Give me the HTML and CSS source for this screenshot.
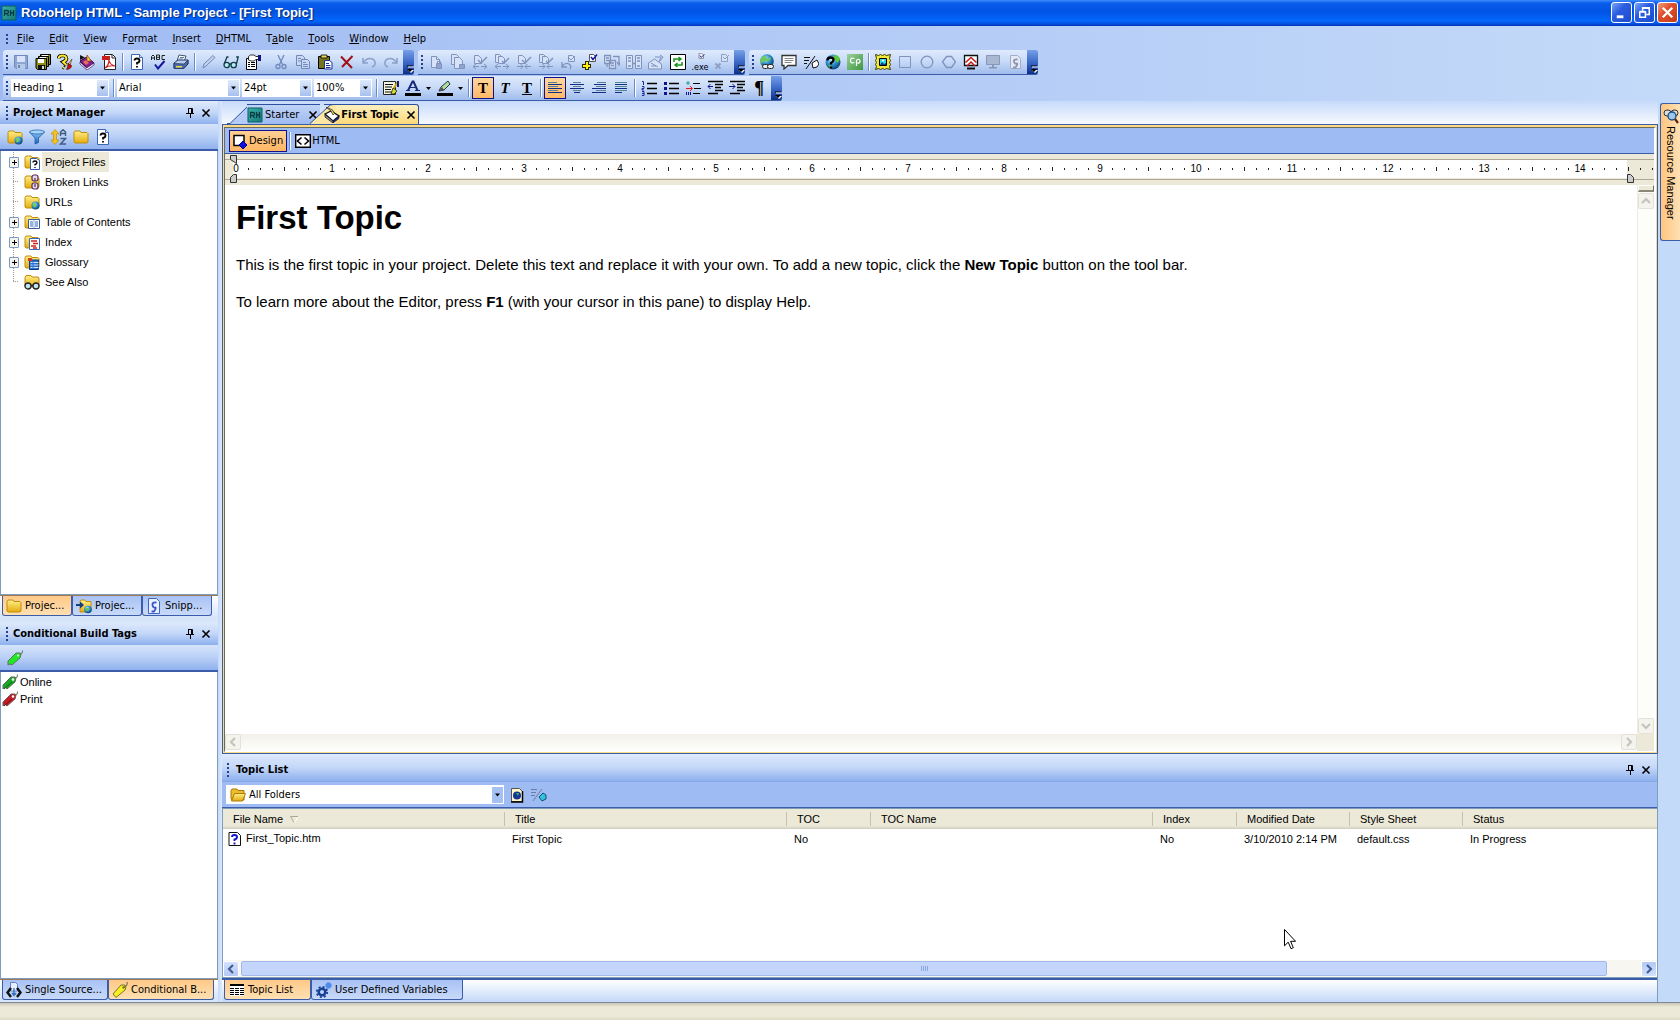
FILE: index.html
```html
<!DOCTYPE html>
<html lang="en">
<head>
<meta charset="utf-8">
<meta name="viewport" content="width=device-width, initial-scale=1">
<title>RoboHelp HTML - Sample Project - [First Topic]</title>
<link rel="stylesheet" href="styles.css">
</head>
<body>
<svg class="sprite" aria-hidden="true">
  <defs>
    <linearGradient id="g-folder" x1="0" y1="0" x2="0" y2="1"><stop offset="0" stop-color="#fff08a"/><stop offset="1" stop-color="#e5ab0c"/></linearGradient>
    <linearGradient id="g-blue" x1="0" y1="0" x2="0" y2="1"><stop offset="0" stop-color="#8cc4f4"/><stop offset="1" stop-color="#1d62b4"/></linearGradient>
    <radialGradient id="g-globe" cx=".4" cy=".35" r=".7"><stop offset="0" stop-color="#c8f2ff"/><stop offset=".5" stop-color="#2f8fc8"/><stop offset="1" stop-color="#063a70"/></radialGradient>
    <linearGradient id="g-teal" x1="0" y1="0" x2="1" y2="1"><stop offset="0" stop-color="#3fb0aa"/><stop offset="1" stop-color="#127a78"/></linearGradient>
    <linearGradient id="g-green" x1="0" y1="0" x2="1" y2="1"><stop offset="0" stop-color="#9bd09a"/><stop offset="1" stop-color="#3c9740"/></linearGradient>
  </defs>

  <symbol id="i-rh" viewBox="0 0 16 16"><path d="M1 1h14v14H1z" fill="url(#g-teal)" stroke="#0d5f63"/><path d="M3.500 11V5.500h2.500q1.500 0 1.500 1.500t-1.500 1.500H3.500M6 8.500 7.500 11M9.500 5v6M12.500 5v6M9.500 8h3" fill="none" stroke="#083c44" stroke-width="1.300"/></symbol>
  <symbol id="i-save" viewBox="0 0 16 16"><path d="M1.500 1.500h13v13H3l-1.500-1.500z" fill="#8ea6d2" stroke="#7189ba"/><path d="M4 2h8v6H4z" fill="#d6e3f8"/><path d="M4 10h8v5H4z" fill="#b8c9e8"/><path d="M5 11h2v3H5z" fill="#6f87b8"/></symbol>
  <symbol id="i-saveall" viewBox="0 0 16 16"><path d="M5.500.5h10v10h-10z" fill="#8f8f1c" stroke="#000"/><path d="M3.500 2.500h10v10h-10z" fill="#8f8f1c" stroke="#000"/><path d="M1 4.500h10.500v11H2.500L1 14z" fill="#8f8f1c" stroke="#000"/><path d="M3 5h6v4H3zM7 1h6v1H7zM5 3h6v1H5z" fill="#fff"/><path d="M3 11h7v4H3z" fill="#111"/><path d="M7 12h2v3H7z" fill="#ddd"/></symbol>
  <symbol id="i-help-edit" viewBox="0 0 16 16"><path d="M1.500 4.500Q2 1.500 5.500 1.500T9.500 4.500Q9.500 6.500 6 8l3.500 3M6 13l1.500 1" fill="none" stroke="#000" stroke-width="3.600"/><path d="M1.500 4.500Q2 1.500 5.500 1.500T9.500 4.500Q9.500 6.500 6 8l3.500 3M6 13l1.500 1" fill="none" stroke="#ffec2c" stroke-width="1.900"/><path d="m15 5-4 5 2 1.500z" fill="#e8c080" stroke="#603000" stroke-width=".6"/><path d="m11 9.500 3.500 2q0 3.500-5 4 1.500-2 1.500-6z" fill="#c81010" stroke="#400" stroke-width=".6"/></symbol>
  <symbol id="i-book" viewBox="0 0 16 16"><path d="m1 7 7-4 7 6-7 5z" fill="#8a1c94" stroke="#2c0640"/><path d="m1 8 6.500 6 7.500-5v2l-7 5-7-6z" fill="#fff" stroke="#44105c" stroke-width=".7"/><path d="m1 1 5 2.500L1 6z" fill="#111"/><path d="M8 1v6h4z" fill="#ffe030" stroke="#9c4c00" stroke-width=".8"/><path d="m4 8 3-2 3 3-3 2z" fill="#e07060"/></symbol>
  <symbol id="i-pdf" viewBox="0 0 16 16"><path d="M3.500.5h8l3 3v12h-11z" fill="#fff" stroke="#222"/><path d="M1 2h8v4H1z" fill="#c81e1e"/><path d="M11 1v3h3" fill="none" stroke="#222"/><path d="M4 14q4-3 4-8 1 5 6 6-6-1-10 2z" fill="none" stroke="#d42020" stroke-width="1.200"/></symbol>
  <symbol id="i-topic-help" viewBox="0 0 16 16"><path d="M2.500.5h8l3 3v12h-11z" fill="#fff" stroke="#3a66b4"/><path d="M10.500.5v3h3" fill="#cfe0fa" stroke="#3a66b4"/><path d="M5.500 6.500q0-2 2.500-2t2.500 2T8 9v1.500M8 12v1.500" fill="none" stroke="#000" stroke-width="1.800"/></symbol>
  <symbol id="i-abc" viewBox="0 0 16 16"><path d="M.5 6V2.500L2 1l1.500 1.500V6M.5 4h3M5.500 1v4.500h3V1h-3M5.500 3.300h3M14 1.500h-3v4h3" fill="none" stroke="#222"/><path d="m4 10.500 3 4 6.500-7.500" fill="none" stroke="#16169c" stroke-width="2"/></symbol>
  <symbol id="i-print" viewBox="0 0 16 16"><path d="m6 1 7 1-2 6-7-1z" fill="#fff" stroke="#456"/><path d="m1 9 4-3h10v4l-4 4H1z" fill="#b9cdea" stroke="#223a6c"/><path d="m1 9.500 10 .5 4-4v4l-4 4.500H1z" fill="#4a6aa4" stroke="#182c58" stroke-width=".7"/><path d="M3 12h6v1.500H3z" fill="#e9e04c"/><path d="M7 3.500h4M6 5h4" stroke="#5577b0"/></symbol>
  <symbol id="i-pencil" viewBox="0 0 16 16"><path d="m2 14 1-4L12 1.500l2 2L5 12z" fill="#c3d2ec" stroke="#7189ba"/></symbol>
  <symbol id="i-glasses" viewBox="0 0 16 16"><g fill="#b6ecf4" stroke="#123c48" stroke-width="1.300"><circle cx="3.700" cy="11" r="2.700"/><circle cx="10.700" cy="11" r="2.700"/><path d="M6.300 10h1.800M1.200 10 4 3h1.500M13.400 10l1.800-7h-2" fill="none"/></g></symbol>
  <symbol id="i-props" viewBox="0 0 16 16"><path d="M1.500 4.500h10v11h-10z" fill="#fff" stroke="#000"/><path d="M3 8.500h2M6 8.500h4M3 10.500h2M6 10.500h4M3 12.500h2M6 12.500h4" stroke="#000"/><path d="M3.500 6V2.500l2-1.500H9l2 1.500h4v3h-4L9 7H6z" fill="#fff" stroke="#000" stroke-width=".8"/><path d="M13 1h3v6h-3z" fill="#141480"/></symbol>
  <symbol id="i-cut" viewBox="0 0 16 16"><g fill="none" stroke="#7189ba" stroke-width="1.300"><path d="M5 1l4.500 9.500M11 1 6.500 10.500"/><circle cx="5" cy="12.500" r="2"/><circle cx="11" cy="12.500" r="2"/></g></symbol>
  <symbol id="i-copy" viewBox="0 0 16 16"><g fill="#c9d8f2" stroke="#7189ba"><path d="M1.500 1.500h6l2 2v8h-8z"/><path d="M6.500 5.500h6l2 2v7h-8z"/><path d="M3 4.500h3M3 7h3M8 8.500h3M8 10.500h5M8 12.500h5"/></g></symbol>
  <symbol id="i-paste" viewBox="0 0 16 16"><path d="M1.500 2.500h11v12h-11z" fill="#77721e" stroke="#000"/><path d="M4 1h6v3H4z" fill="#e6d85c" stroke="#000" stroke-width=".8"/><path d="M7.500 6.500h5l2.500 2v6.500H7.500z" fill="#fff" stroke="#1c3290"/><path d="M9 9.500h3M9 11.500h4.500M9 13.500h4.500" stroke="#1c3290"/></symbol>
  <symbol id="i-delete" viewBox="0 0 16 16"><path d="M2 2.500 13 14M13.500 2 3 13" fill="none" stroke="#a01016" stroke-width="2"/></symbol>
  <symbol id="i-undo" viewBox="0 0 16 16"><path d="M2 4v5h5M2.500 8.500Q5 4.500 9 4.500t5 3.500-3 5" fill="none" stroke="#8ba0c8" stroke-width="1.500"/></symbol>
  <symbol id="i-redo" viewBox="0 0 16 16"><path d="M14 4v5H9M13.500 8.500Q11 4.500 7 4.500T2 8t3 5" fill="none" stroke="#8ba0c8" stroke-width="1.500"/></symbol>

  <symbol id="i-lock1" viewBox="0 0 16 16"><g fill="#d6e2f7" stroke="#7f93bd"><path d="M3.500 2.500h5l3 3v8h-8z"/><path d="M8.500 2.500v3h3"/><path d="M8.500 9.500h5v5h-5z" fill="#8fa3cc"/><path d="M9.500 9.500v-2h3v2" fill="none"/></g></symbol>
  <symbol id="i-lock2" viewBox="0 0 16 16"><g fill="#d6e2f7" stroke="#7f93bd"><path d="M1.500.5h5l2 2v8h-7z"/><path d="M4.500 3.500h5l3 3v8h-8z"/><path d="M9.500 10.500h5v4h-5z" fill="#8fa3cc"/></g></symbol>
  <symbol id="i-check-in" viewBox="0 0 16 16"><g fill="none" stroke="#7f93bd"><path d="M2.500 1.500h4l3 3v5h-7z" fill="#d6e2f7"/><path d="m6 6 3 3 6-6" stroke-width="1.500"/><path d="M1 12.500h6M4 10l-3 2.500L4 15M15 12.500H9m3-2.500 3 2.500-3 2.500"/></g></symbol>
  <symbol id="i-check-all" viewBox="0 0 16 16"><g fill="none" stroke="#7f93bd"><path d="M1.500.5h4l2 2v6h-6z" fill="#d6e2f7"/><path d="M4.500 2.500h4l2 2v5h-6z" fill="#d6e2f7"/><path d="m8 7 2 2 5-5" stroke-width="1.500"/><path d="M1 12.500h6M4 10l-3 2.500L4 15M15 12.500H9m3-2.500 3 2.500-3 2.500"/></g></symbol>
  <symbol id="i-check-to" viewBox="0 0 16 16"><g fill="none" stroke="#7f93bd"><path d="M2.500 1.500h4l3 3v5h-7z" fill="#d6e2f7"/><path d="m6 6 3 3 6-6" stroke-width="1.500"/><path d="M1 12.500h6M4.500 10 7 12.500 4.500 15M15 12.500H9m2.500-2.500L9 12.500l2.500 2.500"/></g></symbol>
  <symbol id="i-check-to-all" viewBox="0 0 16 16"><g fill="none" stroke="#7f93bd"><path d="M1.500.5h4l2 2v6h-6z" fill="#d6e2f7"/><path d="M4.500 2.500h4l2 2v5h-6z" fill="#d6e2f7"/><path d="m8 7 2 2 5-5" stroke-width="1.500"/><path d="M1 12.500h6M4.500 10 7 12.500 4.500 15M15 12.500H9m2.500-2.500L9 12.500l2.500 2.500"/></g></symbol>
  <symbol id="i-undo-check" viewBox="0 0 16 16"><g fill="none" stroke="#7f93bd"><path d="M8.500 1.500h4l2 2v4h-6z" fill="#d6e2f7"/><path d="m9 4 2 2 4-4"/><path d="M2 8v5h5M2 12q4-4 7-2t1 5" stroke-width="1.300"/></g></symbol>
  <symbol id="i-add-version" viewBox="0 0 16 16"><path d="M7.500.5h4l2 2v5h-6z" fill="#fff" stroke="#555"/><path d="m9 3 2 2.500 4-5" fill="none" stroke="#16169c" stroke-width="1.500"/><path d="M3 7h4v3h2v4H7v2H3v-2H0v-4h3z" fill="#2c2c00"/><path d="M4 8h2v3h2v2H6v2H4v-2H1v-2h3z" fill="#ffee14"/></symbol>
  <symbol id="i-diff" viewBox="0 0 16 16"><g fill="#d6e2f7" stroke="#7f93bd" stroke-width="1.300"><path d="M.5 1.500h6v8h-6zM5.500 6.500h6v8h-6z"/><path d="M9 2.500h6v8M2 4h3M2 6.500h3M7 9h3M7 11.500h3M3 10v3M13 8l2 3 1-3" fill="none"/></g></symbol>
  <symbol id="i-history" viewBox="0 0 16 16"><g fill="#d6e2f7" stroke="#7f93bd"><path d="M.5 1.500h6v13h-6zM9.500 1.500h6v13h-6z"/><path d="M2 4h3M2 7h3M2 12h3M11 4h3M11 7h3M11 12h3M6 9.500h4" fill="none" stroke-width="1.500"/></g></symbol>
  <symbol id="i-vprops" viewBox="0 0 16 16"><g fill="#d6e2f7" stroke="#7f93bd"><path d="m.5 9 6-4 7 5v5H.5z"/><path d="M3 9l7 4M7 3h6l-2 5M12 1l3 2-3 4M3 12h5" fill="none"/></g></symbol>
  <symbol id="i-refresh" viewBox="0 0 16 16"><path d="M.5.5h15v15H.5z" fill="#fff" stroke="#000"/><path d="M4 8V5h6M8.500 3l2.500 2-2.500 2M12 8v3H6M7.500 9 5 11l2.500 2" fill="none" stroke="#17901c" stroke-width="1.500"/></symbol>
  <symbol id="i-vcheck" viewBox="0 0 16 16"><path d="M6.500.5h4l3 3v5h-7z" fill="#fff" stroke="#555"/><path d="m8 4 2 3 5-5" fill="none" stroke="#16169c" stroke-width="1.500"/></symbol>
  <symbol id="i-xcheck" viewBox="0 0 16 16"><g fill="none" stroke="#8f9fc2"><path d="M7.500.5h4l2 2v5h-6z" fill="#d6e2f7"/><path d="m9 3 2 2 4-4"/><path d="m1.500 9.500 5 5M6.500 9.500l-5 5" stroke-width="1.800"/></g></symbol>

  <symbol id="i-hyperlink" viewBox="0 0 16 16"><circle cx="8" cy="7" r="6.800" fill="url(#g-globe)"/><path d="M4 2q3 0 4 2t4-1q0 4-4 4T3 9 1 5z" fill="#6cc860"/><g fill="#eee" stroke="#222"><rect x="3.500" y="10.500" width="6" height="4" rx="2"/><rect x="8.500" y="10.500" width="6" height="4" rx="2"/></g></symbol>
  <symbol id="i-popup" viewBox="0 0 16 16"><path d="M1 1.500h14v10H7L3 15v-3.500H1z" fill="#fff" stroke="#333" stroke-width="1.300"/><path d="M3.500 4.500h9M3.500 6.500h9M3.500 8.500h7" stroke="#888"/></symbol>
  <symbol id="i-snippet" viewBox="0 0 16 16"><path d="M1 3.500h6M1 6.500h5M1 9.500h3" stroke="#111"/><path d="M3 15 12 2" stroke="#111" fill="none"/><path d="m9 9 5-3 2 4-2 3-4 1z" fill="#fff" stroke="#111"/></symbol>
  <symbol id="i-globe-help" viewBox="0 0 16 16"><circle cx="8" cy="8" r="7.500" fill="url(#g-globe)"/><path d="M9 1q5 0 6 4l-2 4-4-4zM3 11l4 1-1 3z" fill="#5cc83c"/><path d="M2.500 6.500q0-3 3-3t3 2.500q0 1.500-2.500 3v1.500M6 12.500v2" fill="none" stroke="#000" stroke-width="2.300"/></symbol>
  <symbol id="i-cp" viewBox="0 0 16 16"><path d="M0 0h16v16H0z" fill="url(#g-green)"/><path d="M7.500 4.500q-4-1.500-4 2t4 2M9.500 12V6M9.500 6q3.500-1.500 3.500 1.200t-3.500 1.500" fill="none" stroke="#fff" stroke-width="1.200"/></symbol>
  <symbol id="i-image" viewBox="0 0 16 16"><path d="m.5.500 3 1 2-1 2 1 2-1 2 1 4-1-1 4 1 2-1 2 1 2-1 2 1 3-4-1-2 1-2-1-2 1-2-1-3 1 1-3-1-2 1-2-1-2 1-2z" fill="#f0e83c" stroke="#3c3a00"/><path d="M4.500 4.500h7v7h-7z" fill="#30d8e8" stroke="#000"/><path d="m5 11 2-3 2 2 2-1v2z" fill="#0a4080"/><circle cx="8" cy="6.500" r="1" fill="#fff"/></symbol>
  <symbol id="i-rect" viewBox="0 0 16 16"><path d="M2.500 2.500h11v11h-11z" fill="none" stroke="#7f93bd"/></symbol>
  <symbol id="i-circle" viewBox="0 0 16 16"><circle cx="8" cy="8" r="5.800" fill="none" stroke="#7f93bd" stroke-width="1.300"/></symbol>
  <symbol id="i-poly" viewBox="0 0 16 16"><path d="m1.500 8 4-5.500h5l4 5.500-4 5.500h-5z" fill="none" stroke="#7f93bd" stroke-width="1.300"/></symbol>
  <symbol id="i-screen-up" viewBox="0 0 16 16"><path d="M1.500 1.500h13v10h-13z" fill="#eff" stroke="#111" stroke-width="1.300"/><path d="M4 14.500h8" stroke="#111" stroke-width="2"/><path d="m2.500 8.500 5.500-5 5.500 5M4 12l4-4 4 4" fill="none" stroke="#d01818" stroke-width="1.500"/></symbol>
  <symbol id="i-screen" viewBox="0 0 16 16"><path d="M1.500 1.500h13v9h-13z" fill="#a9b7d2" stroke="#8797b8"/><path d="M7 11h2v2h3v1.500H4V13h3z" fill="#8797b8"/></symbol>
  <symbol id="i-script-gray" viewBox="0 0 16 16"><path d="M3.500 1.500h7l3 3v10h-10z" fill="#e3eaf6" stroke="#a3aec6"/><path d="M10.500 5.500q-4-.5-3.500 2t2.500 2-1 4H6" fill="none" stroke="#8995b2" stroke-width="1.800"/></symbol>

  <symbol id="i-style" viewBox="0 0 16 16"><path d="M.5 1.500h12v13H.5z" fill="#f6f4e2" stroke="#222"/><path d="M2 4.500h8M2 7h7M2 9.500h6M2 12h9" stroke="#111"/><path d="m14.500 2-4 7" stroke="#c8a800" stroke-width="2"/><path d="m10 8 4 3-3 3H8z" fill="#d8e020" stroke="#222" stroke-width=".8"/><path d="M14 1h2v6h-2z" fill="#101890"/></symbol>
  <symbol id="i-fontcolor" viewBox="0 0 16 16"><path d="m3 10.500 4.500-9h1l4 9" fill="none" stroke="#1a2a78" stroke-width="2"/><path d="M4.500 7.500h6M1 10.500h4M10 10.500h5" stroke="#1a2a78"/><path d="M0 13h16v3H0z" fill="#000"/></symbol>
  <symbol id="i-highlight" viewBox="0 0 16 16"><path d="m2 11 2-4 7-6 2 3-6 6z" fill="#b0dc9c" stroke="#24304c"/><path d="m2 11 5-1-2-3z" fill="#555"/><path d="M0 13h16v3H0z" fill="#000"/></symbol>
  <symbol id="i-left" viewBox="0 0 16 16"><path d="M1 2.500h9M1 6.500h10M1 10.500h10" stroke="#5d7f92"/><path d="M1 4.500h14M1 8.500h14M1 12.500h14" stroke="#142c86"/></symbol>
  <symbol id="i-center" viewBox="0 0 16 16"><path d="M4 2.500h8M4 6.500h8M4 10.500h8" stroke="#5d7f92"/><path d="M1 4.500h14M1 8.500h14M5 12.500h6" stroke="#142c86"/></symbol>
  <symbol id="i-right" viewBox="0 0 16 16"><path d="M6 2.500h9M5 6.500h10M5 10.500h10" stroke="#5d7f92"/><path d="M3 4.500h12M1 8.500h14M1 12.500h14" stroke="#142c86"/></symbol>
  <symbol id="i-justify" viewBox="0 0 16 16"><path d="M2 2.500h12M2 6.500h12M2 10.500h12" stroke="#4d8c92"/><path d="M2 4.500h12M2 8.500h12M2 12.500h7" stroke="#142c86"/></symbol>
  <symbol id="i-ol" viewBox="0 0 16 16"><path d="M6 3.500h10M6 8.500h10M6 13.500h10" stroke="#000" stroke-width="1.300"/><path d="M1 1.500h1.500V5M1 6.500h2v2H1v1.500h2M1 11.500h2v4H1M1 13.500h2" fill="none" stroke="#1a2a90"/></symbol>
  <symbol id="i-ul" viewBox="0 0 16 16"><path d="M6 3.500h10M6 8.500h10M6 13.500h10" stroke="#000" stroke-width="1.300"/><path d="M1 2h3v3H1zM1 7h3v3H1zM1 12h3v3H1z" fill="#12128c"/></symbol>
  <symbol id="i-multi" viewBox="0 0 16 16"><path d="M8 3.500h7M9 8.500h7M8 13.500h7" stroke="#000"/><path d="M3 1v4M1 3h4" stroke="#18a088"/><path d="M1 8.500h6M5 6l2.500 2.500L5 11" fill="none" stroke="#e01818"/><path d="M1.500 12v3M3.500 12v3M5.500 12v3" stroke="#12128c"/></symbol>
  <symbol id="i-outdent" viewBox="0 0 16 16"><path d="M1 1.500h15M8 4.500h8M8 7.500h6M8 10.500h8M1 13.500h10" stroke="#000" stroke-width="1.500"/><path d="M6 6.500H1M3.500 4 1 6.500 3.500 9" fill="none" stroke="#12128c"/></symbol>
  <symbol id="i-indent" viewBox="0 0 16 16"><path d="M1 1.500h15M8 4.500h8M8 7.500h6M8 10.500h8M1 13.500h10" stroke="#000" stroke-width="1.500"/><path d="M0 6.500h6M3.500 4 6 6.500 3.500 9" fill="none" stroke="#12128c"/></symbol>

  <symbol id="i-folder" viewBox="0 0 16 16"><path d="M1 3.500 2 2h5l1 1.500h6l1 1V13l-1 1H2l-1-1z" fill="url(#g-folder)" stroke="#c08c10"/></symbol>
  <symbol id="i-folder-open" viewBox="0 0 16 16"><path d="M1 3.500 2 2h5l1 1.500h6V13H2l-1-1z" fill="#eebd2c" stroke="#a87808"/><path d="m1.500 14 3-7.500h11l-3 7.500z" fill="url(#g-folder)" stroke="#b07c08"/></symbol>
  <symbol id="i-folder-web" viewBox="0 0 16 16"><use href="#i-folder"/><circle cx="11.500" cy="11.500" r="4" fill="url(#g-globe)"/><path d="m9 9 3.500.5-.5 3-2 1-1-2z" fill="#70cc58"/></symbol>
  <symbol id="i-filter" viewBox="0 0 16 16"><path d="M.5 3 6 9v6l3.500-1.500V9l6-6z" fill="url(#g-blue)" stroke="#1c5ca8" stroke-width=".8"/><ellipse cx="8" cy="3" rx="7.500" ry="2" fill="#a8d4f8" stroke="#2868b0" stroke-width=".8"/></symbol>
  <symbol id="i-sort" viewBox="0 0 16 16"><path d="m4 .500 4 4.500H5.500v6H8L4 15.500 0 11h2.500V5H0z" fill="#f5c31e" stroke="#c48a08" stroke-width=".7"/><path d="M9.500 7V3L12 .700 14.500 3v4M9.500 4.500h5M9.500 9.500h5l-5 5.500h5.500" fill="none" stroke="#3c5c84" stroke-width="1.400"/></symbol>
  <symbol id="i-folder-help" viewBox="0 0 16 16"><use href="#i-folder"/><path d="M6.500 4.500h6l3 2v9h-9z" fill="#fff" stroke="#2c5cb8"/><path d="M9 8.500q0-1.500 2-1.500t2 1.500-2 2v1M11 13v1" fill="none" stroke="#000" stroke-width="1.300"/></symbol>
  <symbol id="i-folder-broken" viewBox="0 0 16 16"><use href="#i-folder"/><g fill="#e8d8e8" stroke="#54285c" stroke-width="1.200"><rect x="8" y="1" width="6" height="6" rx="2"/><rect x="8" y="9" width="6" height="6" rx="2"/><path d="M11 4v3M11 10v3"/></g></symbol>
  <symbol id="i-folder-toc" viewBox="0 0 16 16"><use href="#i-folder"/><path d="M4.500 5.500h11v9h-11z" fill="#fff" stroke="#3c5c9c"/><path d="M6 8h3M6 10h3M6 12h3M11 8h3M11 10h3M11 12h3" stroke="#3468c0"/><path d="M10 6v8" stroke="#9cb4d8"/></symbol>
  <symbol id="i-folder-index" viewBox="0 0 16 16"><use href="#i-folder"/><path d="M5.500 4.500h10v11h-10z" fill="#fff" stroke="#3468c0"/><path d="M7 7h6M9 9.500h5M7 12h5M9 14h4" stroke="#d02020" stroke-width="1.300"/></symbol>
  <symbol id="i-folder-gloss" viewBox="0 0 16 16"><use href="#i-folder"/><path d="M5.500 6h9v9.500h-9z" fill="#2c70d0" stroke="#0c3c88"/><path d="M6.500 8.500h2M9.500 8.500h5M6.500 11h2M9.500 11h5M6.500 13.500h2M9.500 13.500h5" stroke="#cfe4ff"/><path d="M4 4h4v3H4z" fill="#d04020"/></symbol>
  <symbol id="i-folder-see" viewBox="0 0 16 16"><path d="M1 3.500 2 1.500h5L8 3h6l1 1v9H1z" fill="url(#g-folder)" stroke="#c08c10"/><g fill="#bfe4f6" stroke="#222" stroke-width="1.300"><circle cx="4" cy="12" r="3"/><circle cx="12" cy="12" r="3"/><path d="M7 11.500h2"/></g></symbol>
  <symbol id="i-folder-arrow" viewBox="0 0 16 16"><path d="M4 3.500 5 2h4l1 1.500h5V13l-1 1H4z" fill="url(#g-folder)" stroke="#c08c10"/><path d="M0 6h4V3.500L8 7l-4 3.500V8H0z" fill="#123c84"/><circle cx="12" cy="11.500" r="3.800" fill="url(#g-globe)"/><path d="m10 10 3 0-1 3-2 0z" fill="#60c850"/></symbol>
  <symbol id="i-script" viewBox="0 0 16 16"><path d="M2.500.5h8l3 3v12h-11z" fill="#e8f0ff" stroke="#3c64c0"/><path d="M10.500 4.500q-4.500-.5-4 2.500t2.500 2.500-1 4H5.500" fill="none" stroke="#3c58c8" stroke-width="1.800"/></symbol>

  <symbol id="i-tag-green" viewBox="0 0 16 16"><path d="m1 15 0-4 8-8 4 0 1 1-1 4-8 7-2-1z" fill="#22e824" stroke="#667066"/><path d="M13 4q3 0 2.500-3.500" fill="none" stroke="#667066"/><circle cx="11" cy="5.500" r="1" fill="#fff"/></symbol>
  <symbol id="i-tag-online" viewBox="0 0 16 16"><path d="m1 15 0-4 8-8 4 0 1 1-1 4-8 7-2-2z" fill="#18a824" stroke="#5a6a5a"/><path d="m2 15 8-7" stroke="#0c6414"/><path d="M13 4q3 0 2.500-3.500" fill="none" stroke="#667066"/><circle cx="11" cy="5.500" r="1.300" fill="#fff"/></symbol>
  <symbol id="i-tag-print" viewBox="0 0 16 16"><path d="m1 15 0-4 8-8 4 0 1 1-1 4-8 7-2-2z" fill="#c81c24" stroke="#6a5a5a"/><path d="m2 15 8-7" stroke="#700c14"/><path d="M13 4q3 0 2.500-3.500" fill="none" stroke="#667066"/><circle cx="11" cy="5.500" r="1.300" fill="#fff"/></symbol>
  <symbol id="i-tag-yellow" viewBox="0 0 16 16"><path d="m1 12 8-9 4 0 1 2-1 3-9 7.500z" fill="#f6f020" stroke="#77742c"/><path d="M12 5q4-1 3-5" fill="none" stroke="#5c5a4c"/><circle cx="11.500" cy="5.500" r="1.200" fill="#77742c"/></symbol>
  <symbol id="i-source" viewBox="0 0 16 16"><path d="M4.500.5h5l2 2V9h-7z" fill="#e6f0ff" stroke="#5c84cc"/><path d="M5 6 1.500 10.500 5 15M11 6l3.500 4.500L11 15" fill="none" stroke="#111" stroke-width="2.500"/><path d="M8 6v7M6 11l2 2.500 2-2.500" fill="none" stroke="#2c6cb8" stroke-width="1.300"/></symbol>
  <symbol id="i-grid" viewBox="0 0 16 16"><path d="M1 2h14v12H1z" fill="#fff"/><path d="M1 2h14v2H1z" fill="#000"/><path d="M1 6.500h14M1 8.500h14M1 10.500h14M1 12.500h14" stroke="#000" stroke-dasharray="4 1"/></symbol>
  <symbol id="i-gears" viewBox="0 0 16 16"><circle cx="6" cy="10" r="3.300" fill="none" stroke="#173f94" stroke-width="2.500"/><circle cx="6" cy="10" r="5.200" fill="none" stroke="#173f94" stroke-width="1.800" stroke-dasharray="2 2.080"/><circle cx="12.500" cy="3.500" r="2.700" fill="#4c8ce8"/><circle cx="12.500" cy="3.500" r="3" fill="none" stroke="#4c8ce8" stroke-dasharray="1.300 1"/></symbol>
  <symbol id="i-view" viewBox="0 0 16 16"><path d="M2.500 1.500h8l3 3v10h-11z" fill="#fff9c8" stroke="#555"/><path d="M13.500 4v11H2" fill="none" stroke="#000" stroke-width="1.500"/><circle cx="8" cy="8.500" r="4" fill="#14359c"/><path d="m7 6 3 0-1 3z" fill="#38b850"/></symbol>
  <symbol id="i-sync" viewBox="0 0 16 16"><path d="M0 2.500h6M0 5.500h5M0 8.500h4M2 14 11 2" stroke="#6d7c9a" fill="none"/><path d="m8 10 4-4 3 2v4l-4 2z" fill="#30c4d8" stroke="#174c80"/></symbol>
  <symbol id="i-topic" viewBox="0 0 16 16"><path d="M2 1.500h8.500l3 3v10H2z" fill="#fff" stroke="#111"/><path d="M5 6q0-2 2.500-2T10 6 7.500 8.500v1.500M7.500 11.500v2" fill="none" stroke="#1414c8" stroke-width="1.900"/></symbol>
  <symbol id="i-design" viewBox="0 0 16 16"><path d="M2 2.500h10v10H2z" fill="#fff" stroke="#000" stroke-width="1.500"/><path d="m11 8 4 4-4 4-4-4z" fill="#1010d8" stroke="#000090"/></symbol>
  <symbol id="i-html" viewBox="0 0 16 16"><path d="M.7 1.700h14.600v12.600H.7z" fill="#fff" stroke="#000" stroke-width="1.400"/><path d="m6.500 4.500-4 3.500 4 3.500M9.500 4.500l4 3.500-4 3.500" fill="none" stroke="#000" stroke-width="1.600"/></symbol>
  <symbol id="i-editor" viewBox="0 0 16 16"><path d="m1 7 6-3 8 5-6 5z" fill="#fff" stroke="#111" stroke-width="1.300"/><path d="m9 14 6-5v2.500l-6 4.500z" fill="#1c2890" stroke="#111" stroke-width=".6"/><path d="m1 7.500 8 6.500v2L1 10z" fill="#999" stroke="#111" stroke-width=".8"/><path d="m2 0 5 4 2 4 1.500-1.500L8.500 3z" fill="#d8d850" stroke="#333" stroke-width=".8"/></symbol>
  <symbol id="i-resource" viewBox="0 0 16 16"><rect x="1" y="2" width="7" height="6" rx="3" fill="#ddd" stroke="#333"/><rect x="8" y="2" width="7" height="6" rx="3" fill="#ddd" stroke="#333"/><circle cx="9" cy="8" r="4" fill="#9cc8ec" stroke="#1f4f84" stroke-width="1.400"/><path d="m12 11 3 4" stroke="#5c2410" stroke-width="2.200"/></symbol>
  <symbol id="i-pin" viewBox="0 0 10 10"><path d="M3 .500h4.500M3.500.5v5M6.500.5v5M7.500.5v5M1 5.500h8M5.500 6v4" fill="none" stroke="#000"/></symbol>
  <symbol id="i-x" viewBox="0 0 10 10"><path d="m1.500 1.500 7 7M8.500 1.500l-7 7" fill="none" stroke="#000" stroke-width="1.600"/></symbol>
  <symbol id="i-chev" viewBox="0 0 10 10"><path d="m7 1-4 4 4 4" fill="none" stroke="currentColor" stroke-width="2.200"/></symbol>
  <symbol id="i-more" viewBox="0 0 8 8"><path d="M1 1h6" stroke="#000"/><path d="M2 2h6" stroke="#fff"/><path d="M2 5h6L5 8z" fill="#fff"/><path d="M1 4h6L4 7z" fill="#000"/></symbol>
  <symbol id="i-down" viewBox="0 0 5 3"><path d="M0 0h5L2.500 3z" fill="#000"/></symbol>
</svg>

<header class="titlebar">
  <svg class="icon"><use href="#i-rh"/></svg>
  <h1 class="titlebar-text">RoboHelp HTML - Sample Project - [First Topic]</h1>
  <button class="winbtn" aria-label="Minimize"><svg viewBox="0 0 20 20"><path d="M5 14.500h7" stroke="#fff" stroke-width="3"/></svg></button>
  <button class="winbtn" aria-label="Restore"><svg viewBox="0 0 20 20"><path d="M5 9.500h6v5.500H5zM5 9h6M8 8V5h7v7h-3M8 5.500h7" fill="none" stroke="#fff" stroke-width="1.600"/></svg></button>
  <button class="winbtn winbtn-close" aria-label="Close"><svg viewBox="0 0 20 20"><path d="m5 5 10 10M15 5 5 15" stroke="#fff" stroke-width="2.400"/></svg></button>
</header>

<nav class="menubar" aria-label="Main menu">
  <span class="grip"></span>
  <button><u>F</u>ile</button><button><u>E</u>dit</button><button><u>V</u>iew</button><button>F<u>o</u>rmat</button><button><u>I</u>nsert</button><button><u>D</u>HTML</button><button>T<u>a</u>ble</button><button><u>T</u>ools</button><button><u>W</u>indow</button><button><u>H</u>elp</button>
</nav>

<div class="toolbars">
  <div class="toolbar-row">
    <div class="toolbar" role="toolbar" aria-label="Standard">
      <span class="grip"></span>
      <button class="tb" aria-label="Save"><svg class="icon"><use href="#i-save"/></svg></button>
      <button class="tb" aria-label="Save all"><svg class="icon"><use href="#i-saveall"/></svg></button>
      <button class="tb" aria-label="Generate"><svg class="icon"><use href="#i-help-edit"/></svg></button>
      <button class="tb" aria-label="View output"><svg class="icon"><use href="#i-book"/></svg></button>
      <button class="tb" aria-label="Create PDF"><svg class="icon"><use href="#i-pdf"/></svg></button>
      <span class="sep"></span>
      <button class="tb" aria-label="New topic"><svg class="icon"><use href="#i-topic-help"/></svg></button>
      <button class="tb" aria-label="Spell check"><svg class="icon"><use href="#i-abc"/></svg></button>
      <button class="tb" aria-label="Print"><svg class="icon"><use href="#i-print"/></svg></button>
      <span class="sep"></span>
      <button class="tb" aria-label="Edit"><svg class="icon"><use href="#i-pencil"/></svg></button>
      <button class="tb" aria-label="View"><svg class="icon"><use href="#i-glasses"/></svg></button>
      <button class="tb" aria-label="Properties"><svg class="icon"><use href="#i-props"/></svg></button>
      <span class="gap"></span>
      <button class="tb" aria-label="Cut"><svg class="icon"><use href="#i-cut"/></svg></button>
      <button class="tb" aria-label="Copy"><svg class="icon"><use href="#i-copy"/></svg></button>
      <button class="tb" aria-label="Paste"><svg class="icon"><use href="#i-paste"/></svg></button>
      <button class="tb" aria-label="Delete"><svg class="icon"><use href="#i-delete"/></svg></button>
      <button class="tb" aria-label="Undo"><svg class="icon"><use href="#i-undo"/></svg></button>
      <button class="tb" aria-label="Redo"><svg class="icon"><use href="#i-redo"/></svg></button>
      <button class="more" aria-label="Toolbar options"><svg><use href="#i-more"/></svg></button>
    </div>
    <div class="toolbar" role="toolbar" aria-label="Version control">
      <span class="grip"></span>
      <button class="tb" aria-label="Open version control"><svg class="icon"><use href="#i-lock1"/></svg></button>
      <button class="tb" aria-label="Get latest"><svg class="icon"><use href="#i-lock2"/></svg></button>
      <button class="tb" aria-label="Check out"><svg class="icon"><use href="#i-check-in"/></svg></button>
      <button class="tb" aria-label="Check out all"><svg class="icon"><use href="#i-check-all"/></svg></button>
      <button class="tb" aria-label="Check in"><svg class="icon"><use href="#i-check-to"/></svg></button>
      <button class="tb" aria-label="Check in all"><svg class="icon"><use href="#i-check-to-all"/></svg></button>
      <button class="tb" aria-label="Undo check out"><svg class="icon"><use href="#i-undo-check"/></svg></button>
      <button class="tb" aria-label="Add to version control"><svg class="icon"><use href="#i-add-version"/></svg></button>
      <button class="tb" aria-label="Show differences"><svg class="icon"><use href="#i-diff"/></svg></button>
      <button class="tb" aria-label="Show history"><svg class="icon"><use href="#i-history"/></svg></button>
      <button class="tb" aria-label="File properties"><svg class="icon"><use href="#i-vprops"/></svg></button>
      <button class="tb" aria-label="Refresh status"><svg class="icon"><use href="#i-refresh"/></svg></button>
      <button class="tb tb-exe"><svg><use href="#i-vcheck"/></svg><span>.exe</span></button>
      <button class="tb" aria-label="Remove from version control"><svg class="icon"><use href="#i-xcheck"/></svg></button>
      <button class="more" aria-label="Toolbar options"><svg><use href="#i-more"/></svg></button>
    </div>
    <div class="toolbar" role="toolbar" aria-label="Objects">
      <span class="grip"></span>
      <button class="tb" aria-label="Insert hyperlink"><svg class="icon"><use href="#i-hyperlink"/></svg></button>
      <button class="tb" aria-label="Insert text popup"><svg class="icon"><use href="#i-popup"/></svg></button>
      <button class="tb" aria-label="Insert snippet"><svg class="icon"><use href="#i-snippet"/></svg></button>
      <button class="tb" aria-label="Insert context help"><svg class="icon"><use href="#i-globe-help"/></svg></button>
      <button class="tb" aria-label="Insert Captivate demo"><svg class="icon"><use href="#i-cp"/></svg></button>
      <span class="sep"></span>
      <button class="tb" aria-label="Insert image"><svg class="icon"><use href="#i-image"/></svg></button>
      <button class="tb" aria-label="Rectangle hotspot"><svg class="icon"><use href="#i-rect"/></svg></button>
      <button class="tb" aria-label="Circle hotspot"><svg class="icon"><use href="#i-circle"/></svg></button>
      <button class="tb" aria-label="Polygon hotspot"><svg class="icon"><use href="#i-poly"/></svg></button>
      <button class="tb" aria-label="Bring forward"><svg class="icon"><use href="#i-screen-up"/></svg></button>
      <button class="tb" aria-label="Insert frame"><svg class="icon"><use href="#i-screen"/></svg></button>
      <button class="tb" aria-label="Insert script"><svg class="icon"><use href="#i-script-gray"/></svg></button>
      <button class="more" aria-label="Toolbar options"><svg><use href="#i-more"/></svg></button>
    </div>
  </div>
  <div class="toolbar-row">
    <div class="toolbar toolbar-format" role="toolbar" aria-label="Formatting">
      <span class="grip"></span>
      <span class="combo combo-style"><select aria-label="Style"><option>Heading 1</option></select><svg><use href="#i-down"/></svg></span>
      <span class="sep"></span>
      <span class="combo combo-font"><select aria-label="Font"><option>Arial</option></select><svg><use href="#i-down"/></svg></span>
      <span class="combo combo-size"><select aria-label="Font size"><option>24pt</option></select><svg><use href="#i-down"/></svg></span>
      <span class="combo combo-zoom"><select aria-label="Zoom"><option>100%</option></select><svg><use href="#i-down"/></svg></span>
      <span class="sep"></span>
      <button class="tb" aria-label="Styles"><svg class="icon"><use href="#i-style"/></svg></button>
      <button class="tb tb-split" aria-label="Font color"><svg class="icon"><use href="#i-fontcolor"/></svg><svg class="caret"><use href="#i-down"/></svg></button>
      <button class="tb tb-split" aria-label="Highlight"><svg class="icon"><use href="#i-highlight"/></svg><svg class="caret"><use href="#i-down"/></svg></button>
      <span class="sep"></span>
      <button class="tb tb-letter tb-on" aria-label="Bold" aria-pressed="true"><b>T</b></button>
      <button class="tb tb-letter" aria-label="Italic"><i>T</i></button>
      <button class="tb tb-letter" aria-label="Underline"><u>T</u></button>
      <span class="sep"></span>
      <button class="tb tb-on" aria-label="Align left" aria-pressed="true"><svg class="icon"><use href="#i-left"/></svg></button>
      <button class="tb" aria-label="Center"><svg class="icon"><use href="#i-center"/></svg></button>
      <button class="tb" aria-label="Align right"><svg class="icon"><use href="#i-right"/></svg></button>
      <button class="tb" aria-label="Justify"><svg class="icon"><use href="#i-justify"/></svg></button>
      <span class="sep"></span>
      <button class="tb" aria-label="Numbered list"><svg class="icon"><use href="#i-ol"/></svg></button>
      <button class="tb" aria-label="Bulleted list"><svg class="icon"><use href="#i-ul"/></svg></button>
      <button class="tb" aria-label="Multilevel list"><svg class="icon"><use href="#i-multi"/></svg></button>
      <button class="tb" aria-label="Decrease indent"><svg class="icon"><use href="#i-outdent"/></svg></button>
      <button class="tb" aria-label="Increase indent"><svg class="icon"><use href="#i-indent"/></svg></button>
      <button class="tb tb-letter tb-pilcrow" aria-label="Paragraph">¶</button>
      <button class="more" aria-label="Toolbar options"><svg><use href="#i-more"/></svg></button>
    </div>
  </div>
</div>

<div class="workspace">
  <aside class="side">
    <section class="pod pod-project">
      <header class="pod-head"><span class="grip"></span><h2>Project Manager</h2><button aria-label="Auto hide"><svg><use href="#i-pin"/></svg></button><button aria-label="Close"><svg><use href="#i-x"/></svg></button></header>
      <div class="pod-tools">
        <button class="tb" aria-label="Project"><svg class="icon"><use href="#i-folder-web"/></svg></button>
        <button class="tb" aria-label="Filter"><svg class="icon"><use href="#i-filter"/></svg></button>
        <button class="tb" aria-label="Sort"><svg class="icon"><use href="#i-sort"/></svg></button>
        <button class="tb" aria-label="New folder"><svg class="icon"><use href="#i-folder"/></svg></button>
        <button class="tb" aria-label="New topic"><svg class="icon"><use href="#i-topic-help"/></svg></button>
      </div>
      <ul class="tree">
        <li><button class="expander" aria-label="Expand Project Files"></button><svg class="icon"><use href="#i-folder-help"/></svg><a href="#" class="selected">Project Files</a></li>
        <li><span class="branch"></span><svg class="icon"><use href="#i-folder-broken"/></svg><a href="#">Broken Links</a></li>
        <li><span class="branch"></span><svg class="icon"><use href="#i-folder-web"/></svg><a href="#">URLs</a></li>
        <li><button class="expander" aria-label="Expand Table of Contents"></button><svg class="icon"><use href="#i-folder-toc"/></svg><a href="#">Table of Contents</a></li>
        <li><button class="expander" aria-label="Expand Index"></button><svg class="icon"><use href="#i-folder-index"/></svg><a href="#">Index</a></li>
        <li><button class="expander" aria-label="Expand Glossary"></button><svg class="icon"><use href="#i-folder-gloss"/></svg><a href="#">Glossary</a></li>
        <li><span class="branch"></span><svg class="icon"><use href="#i-folder-see"/></svg><a href="#">See Also</a></li>
      </ul>
      <div class="pod-tabs">
        <button class="active"><svg class="icon"><use href="#i-folder"/></svg>Projec...</button>
        <button><svg class="icon"><use href="#i-folder-arrow"/></svg>Projec...</button>
        <button><svg class="icon"><use href="#i-script"/></svg>Snipp...</button>
      </div>
    </section>
    <section class="pod pod-tags">
      <header class="pod-head"><span class="grip"></span><h2>Conditional Build Tags</h2><button aria-label="Auto hide"><svg><use href="#i-pin"/></svg></button><button aria-label="Close"><svg><use href="#i-x"/></svg></button></header>
      <div class="pod-tools"><button class="tb" aria-label="New tag"><svg class="icon"><use href="#i-tag-green"/></svg></button></div>
      <ul class="tags">
        <li><svg class="icon"><use href="#i-tag-online"/></svg>Online</li>
        <li><svg class="icon"><use href="#i-tag-print"/></svg>Print</li>
      </ul>
      <div class="pod-tabs pod-tabs-wide">
        <button><svg class="icon"><use href="#i-source"/></svg>Single Source...</button>
        <button class="active"><svg class="icon"><use href="#i-tag-yellow"/></svg>Conditional B...</button>
      </div>
    </section>
  </aside>

  <main class="main">
    <div class="doc-tabs">
      <div class="doc-tab doc-tab-back">
        <svg class="slant" viewBox="0 0 26 20"><path d="M0 19.500h3L20 3q2-2.500 5-2.500h1V20H0z" fill="#b5cbf5"/><path d="M0 19.500h3L20 3q2-2.500 5-2.500h1" fill="none" stroke="#2d50a0"/></svg>
        <button class="doc-name"><svg class="icon"><use href="#i-rh"/></svg>Starter</button><button class="doc-close" aria-label="Close Starter"><svg><use href="#i-x"/></svg></button>
      </div>
      <div class="doc-tab doc-tab-front">
        <svg class="slant" viewBox="0 0 26 20"><path d="M0 20 18 3q2-2.500 5-2.500h3V20z" fill="#fbe6a4"/><path d="M0 19.500 18 3q2-2.500 5-2.500h3" fill="none" stroke="#2d50a0"/></svg>
        <button class="doc-name"><svg class="icon"><use href="#i-editor"/></svg>First Topic</button><button class="doc-close" aria-label="Close First Topic"><svg><use href="#i-x"/></svg></button>
      </div>
    </div>
    <section class="editor">
      <div class="editor-inner">
        <div class="view-bar">
          <button class="view-on"><svg class="icon"><use href="#i-design"/></svg>Design</button>
          <span class="sep"></span>
          <button><svg class="icon"><use href="#i-html"/></svg>HTML</button>
        </div>
        <div class="ruler">
          <svg class="marker marker-first" viewBox="0 0 7 9"><path d="M.5.500h6v8l-6-4z" fill="#ccc" stroke="#333"/></svg>
          <svg class="marker marker-left" viewBox="0 0 7 9"><path d="M3.500.5.500 3.500v5h6v-8z" fill="#ccc" stroke="#333"/></svg>
          <svg class="marker marker-right" viewBox="0 0 7 9"><path d="M.5.500h3l3 3v5h-6z" fill="#ccc" stroke="#333"/></svg>
          <ol class="scale">
            <li><span>0</span></li><li><span>1</span></li><li><span>2</span></li><li><span>3</span></li><li><span>4</span></li><li><span>5</span></li><li><span>6</span></li><li><span>7</span></li><li><span>8</span></li><li><span>9</span></li><li><span>10</span></li><li><span>11</span></li><li><span>12</span></li><li><span>13</span></li><li><span>14</span></li>
          </ol>
        </div>
        <div class="canvas-wrap">
          <article class="page">
            <h1>First Topic</h1>
            <p>This is the first topic in your project. Delete this text and replace it with your own. To add a new topic, click the <b>New Topic</b> button on the tool bar.</p>
            <p>To learn more about the Editor, press <b>F1</b> (with your cursor in this pane) to display Help.</p>
          </article>
          <div class="vscroll">
            <span class="splitter"></span>
            <button class="sbtn up" aria-label="Scroll up"><svg><use href="#i-chev"/></svg></button>
            <button class="sbtn down" aria-label="Scroll down"><svg><use href="#i-chev"/></svg></button>
          </div>
        </div>
        <div class="hscroll">
          <button class="sbtn" aria-label="Scroll left"><svg><use href="#i-chev"/></svg></button>
          <button class="sbtn right" aria-label="Scroll right"><svg><use href="#i-chev"/></svg></button>
        </div>
      </div>
    </section>
    <section class="topics">
      <header class="pod-head"><span class="grip"></span><h2>Topic List</h2><button aria-label="Auto hide"><svg><use href="#i-pin"/></svg></button><button aria-label="Close"><svg><use href="#i-x"/></svg></button></header>
      <div class="topic-tools">
        <span class="combo combo-folder"><svg class="icon"><use href="#i-folder-open"/></svg><select aria-label="Folder"><option>All Folders</option></select><svg><use href="#i-down"/></svg></span>
        <button class="tb" aria-label="View topic"><svg class="icon"><use href="#i-view"/></svg></button>
        <button class="tb" aria-label="Show links"><svg class="icon"><use href="#i-sync"/></svg></button>
      </div>
      <div class="topic-list">
        <table>
          <colgroup><col class="c-wide"><col class="c-wide"><col class="c-small"><col class="c-wide"><col class="c-small"><col class="c-mid"><col class="c-mid"><col></colgroup>
          <thead><tr><th>File Name <svg class="sort" viewBox="0 0 9 7"><path d="M8.500.5H.5L4 6.500" fill="none" stroke="#aca899"/><path d="M4.500 6.500 8.500.5" stroke="#fff"/></svg></th><th>Title</th><th>TOC</th><th>TOC Name</th><th>Index</th><th>Modified Date</th><th>Style Sheet</th><th>Status</th></tr></thead>
          <tbody><tr><td><svg class="icon"><use href="#i-topic"/></svg>First_Topic.htm</td><td>First Topic</td><td>No</td><td></td><td>No</td><td>3/10/2010 2:14 PM</td><td>default.css</td><td>In Progress</td></tr></tbody>
        </table>
        <div class="list-scroll">
          <button class="sbtn sbtn-live" aria-label="Scroll left"><svg><use href="#i-chev"/></svg></button>
          <span class="track"><span class="thumb"></span></span>
          <button class="sbtn sbtn-live right" aria-label="Scroll right"><svg><use href="#i-chev"/></svg></button>
        </div>
      </div>
      <div class="pod-tabs pod-tabs-main">
        <button class="active"><svg class="icon"><use href="#i-grid"/></svg>Topic List</button>
        <button><svg class="icon"><use href="#i-gears"/></svg>User Defined Variables</button>
      </div>
    </section>
  </main>

  <aside class="rail">
    <button><svg class="icon"><use href="#i-resource"/></svg><span>Resource Manager</span></button>
  </aside>
</div>

<footer class="statusbar"></footer>
<svg class="cursor" viewBox="0 0 12 21"><path d="M.5.500v16.300l3.700-3.600 2.800 6.500 2.300-1-2.700-6.400h5z" fill="#fff" stroke="#000"/></svg>
</body>
</html>
```
FILE: styles.css
```css
* { box-sizing: border-box; }

:root {
  --ui: "DejaVu Sans Condensed", "DejaVu Sans", sans-serif;
  --list: "Liberation Sans", Arial, sans-serif;
  --line: #3b5ca8;
  --beige: #ece9d8;
  --bar: linear-gradient(#dfeafc, #c9dbf8 45%, #a0bcec);
}

body {
  margin: 0;
  height: 100vh;
  display: flex;
  flex-direction: column;
  overflow: hidden;
  background: linear-gradient(90deg, #a0bbf3, #c4daf9);
  font: 11px/14px var(--ui);
  color: #000;
}

button {
  display: flex;
  align-items: center;
  justify-content: center;
  padding: 0;
  border: 0;
  background: none;
  color: inherit;
  font: inherit;
  white-space: nowrap;
}

h1, h2, p, ul, ol { margin: 0; padding: 0; }
ul, ol { list-style: none; }
a { color: inherit; text-decoration: none; }
svg { display: block; flex: none; }

.sprite { position: absolute; width: 0; height: 0; }
.icon { width: 16px; height: 16px; }

.grip {
  flex: none;
  width: 2px;
  height: 14px;
  background: repeating-linear-gradient(#27418c 0 2px, transparent 2px 4px);
}

.sep {
  flex: none;
  width: 2px;
  height: 18px;
  margin: 0 2px;
  background: linear-gradient(90deg, #6a8ccb 50%, #fff 50%);
}

/* Title bar */
.titlebar {
  flex: none;
  height: 26px;
  display: flex;
  align-items: center;
  gap: 2px;
  padding: 0 2px 1px 1px;
  background: linear-gradient(#3d8bff, #0a5cea 12%, #0053e4 45%, #0466fc 80%, #0550e0 92%, #0033b4);
}
.titlebar-text {
  flex: 1;
  padding-left: 2px;
  color: #fff;
  font: bold 13px/20px "Liberation Sans", Arial, sans-serif;
  text-shadow: 1px 1px 1px #0a2a7c;
}
.winbtn {
  width: 21px;
  height: 21px;
  border: 1px solid #fff;
  border-radius: 3px;
  background: linear-gradient(135deg, #7ba4f6, #2a5ee0 40%, #1c4cd0);
}
.winbtn svg { width: 19px; height: 19px; }
.winbtn-close { background: linear-gradient(135deg, #f0a080, #e0502c 40%, #c43c18); }

/* Menu bar */
.menubar {
  flex: none;
  height: 24px;
  display: flex;
  align-items: center;
  gap: 15px;
  padding: 2px 0 0 6px;
}
.menubar .grip { height: 10px; margin-right: -6px; }

/* Toolbars */
.toolbars { flex: none; display: flex; flex-direction: column; }
.toolbar-row { display: flex; gap: 4px; padding-left: 3px; height: 25px; }
.toolbar-row + .toolbar-row { height: 26px; padding-top: 1px; }
.toolbar {
  display: flex;
  align-items: center;
  padding-left: 3px;
  background: var(--bar);
  border-bottom: 1px solid var(--line);
  border-radius: 3px 2px 2px 0;
}
.toolbar > .grip { margin-right: 2px; }
.toolbar-format > .grip { margin-right: 3px; }
.gap { width: 6px; }
.tb { flex: none; width: 22px; height: 22px; }
.tb-on { border: 1px solid #10108c; background: linear-gradient(#ffd79a, #ffb868); }
.tb-split { width: 32px; gap: 5px; }
.caret { width: 5px; height: 3px; }
.tb-letter { font: bold 15px/18px "Liberation Serif", serif; }
.tb-pilcrow { font-size: 18px; }
.tb-exe { flex-direction: column; font-size: 9px; line-height: 8px; }
.tb-exe svg { width: 12px; height: 10px; }
.more {
  width: 11px;
  height: 100%;
  margin-left: 1px;
  align-items: flex-end;
  padding: 0 0 1px 2px;
  border-radius: 0 2px 2px 0;
  background: linear-gradient(#76a0e6, #3d6ac8 50%, #0b2f88);
}
.more svg { width: 8px; height: 8px; }

.combo {
  flex: none;
  display: flex;
  align-items: center;
  height: 18px;
  margin-right: 2px;
  background: #fff;
}
.combo select {
  flex: 1;
  min-width: 0;
  height: 18px;
  padding: 0 2px;
  border: 0;
  background: none;
  appearance: none;
  font: 11px/14px var(--ui);
}
.combo > svg:last-child {
  width: 11px;
  height: 16px;
  margin-right: 1px;
  padding: 6px 3px;
  background: linear-gradient(#dfeafc, #a6c0ee);
}
.combo-style { width: 98px; }
.combo-font { width: 123px; }
.combo-size { width: 70px; }
.combo-zoom { width: 58px; }

/* Workspace */
.workspace { flex: 1; min-height: 0; display: flex; border-bottom: 1px solid #7f8896; }
.side {
  flex: none;
  width: 222px;
  padding-right: 4px;
  display: flex;
  flex-direction: column;
  background: linear-gradient(90deg, #c4d9f9 0 218px, #dce8fc);
}
.pod { display: flex; flex-direction: column; min-height: 0; }
.pod-project { flex: 521 1 0; }
.pod-tags { flex: 380 1 0; }

.pod-head {
  flex: none;
  display: flex;
  align-items: center;
  height: 23px;
  padding: 0 4px 0 6px;
  background: linear-gradient(#dfeafc, #c3d7f8 50%, #8db0ee);
}
.pod-head h2 { flex: 1; padding-left: 5px; font: bold 11px/14px var(--ui); }
.pod-head button { width: 16px; height: 14px; }
.pod-head svg { width: 10px; height: 10px; }

.pod-tools {
  flex: none;
  display: flex;
  align-items: center;
  height: 27px;
  padding-left: 4px;
  background: linear-gradient(#d6e4fb, #b9d0f6 50%, #8fb1ee);
  border-bottom: 2px solid var(--line);
}

.tree, .tags {
  flex: 1;
  min-height: 0;
  background: #fff;
  border: 1px solid #7f9db9;
  border-top: 0;
  font: 11px/14px var(--list);
}
.tree { padding: 1px 0 0 8px; }
.tree li { display: flex; align-items: center; height: 20px; }
.tree li > .icon { margin: 0 2px 0 5px; }
.tree a { padding: 2px 3px; line-height: 16px; }
.tree .selected { background: #ece9d8; }
.branch, .expander {
  width: 10px;
  height: 20px;
  background:
    repeating-linear-gradient(90deg, #999 0 1px, transparent 1px 2px) 4px 9px / 8px 1px no-repeat,
    repeating-linear-gradient(#999 0 1px, transparent 1px 2px) 4px 0 / 1px 20px no-repeat;
}
.tree li:last-child .branch {
  background:
    repeating-linear-gradient(90deg, #999 0 1px, transparent 1px 2px) 4px 9px / 8px 1px no-repeat,
    repeating-linear-gradient(#999 0 1px, transparent 1px 2px) 4px 0 / 1px 10px no-repeat;
}
.expander { justify-content: flex-start; }
.expander::before {
  content: "";
  width: 9px;
  height: 9px;
  border: 1px solid #7b9ac0;
  border-radius: 1px;
  background:
    linear-gradient(#000 0 0) center / 5px 1px no-repeat,
    linear-gradient(#000 0 0) center / 1px 5px no-repeat,
    #f4f3ee;
}
.tags { padding-top: 1px; }
.tags li { display: flex; align-items: center; height: 17px; gap: 2px; padding-left: 1px; }

.pod-tabs {
  flex: none;
  display: flex;
  height: 27px;
  padding: 0 2px 6px;
  border-top: 1px solid #9c7a58;
  background: linear-gradient(#fff, #d7e5fb 80%);
}
.pod-tabs button {
  justify-content: flex-start;
  gap: 3px;
  width: 70px;
  height: 20px;
  padding-left: 3px;
  border: 1px solid var(--line);
  border-top: 0;
  border-radius: 0 0 3px 3px;
  background: linear-gradient(#a9c2f4, #c8dafa);
}
.pod-tabs .active { background: linear-gradient(#ffc987, #ffe0b2); }
.pod-tabs-wide { height: 23px; }
.pod-tabs-wide button { width: 106px; }
.pod-tabs-main { height: 24px; background: linear-gradient(#fff, #c3d9f9); border-top: 2px solid var(--line); }
.pod-tabs-main button { width: 87px; padding-left: 4px; }
.pod-tabs-main button + button { width: 152px; }

/* Documents */
.main { flex: 1; min-width: 0; display: flex; flex-direction: column; background: #d7e5fb; }
.doc-tabs {
  flex: none;
  display: flex;
  height: 23px;
  padding: 3px 0 0 5px;
  background: linear-gradient(#c6dafa, #f6f9ff);
}
.doc-tab { display: flex; height: 20px; }
.slant { width: 26px; height: 20px; }
.doc-name { gap: 2px; border-top: 1px solid #2d50a0; }
.doc-close { width: 15px; border-top: 1px solid #2d50a0; }
.doc-close svg { width: 10px; height: 10px; }
.doc-tab-back .slant { margin-right: -6px; }
.doc-tab-back button { background: linear-gradient(#c0d3f7, #9ebaf0); }
.doc-tab-back .doc-name { padding-right: 6px; }
.doc-tab-front {
  margin-left: -10px;
  font-weight: bold;
  background: linear-gradient(#fdf0c4, #fbd978) 22px 0 no-repeat;
}
.doc-tab-front .slant { margin-right: -12px; }
.doc-tab-front .doc-name { gap: 1px; padding-right: 5px; }
.doc-tab-front .doc-close {
  border-right: 1px solid #2d50a0;
  border-radius: 0 3px 0 0;
  background: linear-gradient(#fdf0c4, #fbd978);
}

.editor {
  flex: 1;
  min-height: 0;
  display: flex;
  border: 1px solid var(--line);
  background: #fadc86;
  padding: 2px 1px 1px;
}
.editor-inner {
  flex: 1;
  min-width: 0;
  display: flex;
  flex-direction: column;
  border: 1px solid #6d6a58;
  border-right: 2px solid #fff;
  border-bottom-color: #fff;
  background: #fff;
}
.view-bar {
  flex: none;
  display: flex;
  align-items: center;
  height: 26px;
  padding-left: 4px;
  background: #9fbbf4;
  border-bottom: 1px solid var(--line);
}
.view-bar button { height: 22px; padding: 0 3px 0 2px; gap: 1px; }
.view-bar .view-on { border: 1px solid #10108c; background: linear-gradient(#ffd194, #ffb664); }

.ruler {
  flex: none;
  position: relative;
  height: 31px;
  padding: 5px 0 7px 11px;
  background:
    linear-gradient(90deg, #fff 0 0) 8px 6px / calc(100% - 35px) 18px no-repeat,
    linear-gradient(transparent 5px, #aca899 5px 6px, transparent 6px 25px, #aca899 25px 26px, transparent 26px),
    var(--beige);
}
.scale { display: flex; align-items: center; height: 19px; overflow: hidden; padding-left: 6px; margin-left: -6px; font: 10px/12px var(--list); }
.scale li { flex: none; display: flex; align-items: center; width: 96px; }
.scale span { flex: none; width: 12px; margin: 0 6px 0 -6px; text-align: center; }
.scale li::after {
  content: "";
  flex: none;
  width: 74px;
  height: 4px;
  background:
    linear-gradient(90deg, #222 1px, transparent 1px) 0 1px / 12px 2px repeat-x,
    linear-gradient(#222 0 0) 36px 0 / 1px 4px no-repeat;
}
.marker { position: absolute; width: 7px; height: 9px; left: 5px; }
.marker-first { top: 1px; }
.marker-left { bottom: 2px; }
.marker-right { left: auto; right: 20px; bottom: 2px; }

.canvas-wrap { flex: 1; min-height: 0; display: flex; }
.page { flex: 1; min-width: 0; padding: 13px 10px 0 11px; font: 15px/19px var(--list); }
.page h1 { margin-bottom: 17px; font: bold 33px/40px var(--list); }
.page p { margin-bottom: 18px; }

.sbtn {
  flex: none;
  width: 16px;
  height: 16px;
  border: 1px solid #e4e2d6;
  border-radius: 2px;
  background: #f4f3ee;
  color: #c6c4b8;
}
.sbtn svg { width: 10px; height: 10px; }
.right { transform: rotate(180deg); }
.up svg { transform: rotate(90deg); }
.down svg { transform: rotate(-90deg); }
.sbtn-live { border-color: #fff; background: linear-gradient(#d3e1fd, #b4c8f6); color: #435f94; }
.vscroll {
  flex: none;
  width: 17px;
  display: flex;
  flex-direction: column;
  border-left: 1px solid #efede2;
  background: #fdfdfa;
}
.vscroll .down { margin-top: auto; }
.splitter { height: 7px; margin-bottom: 1px; border: 1px solid #fff; border-right-color: #716f64; border-bottom: 2px solid #8b8878; background: var(--beige); }
.hscroll {
  flex: none;
  display: flex;
  justify-content: space-between;
  height: 17px;
  padding-right: 17px;
  background: linear-gradient(var(--beige) 0 0) right / 17px 100% no-repeat, linear-gradient(#f2f0e8, #fefefb);
}

/* Topic list */
.topics { flex: none; height: 248px; display: flex; flex-direction: column; border-right: 1px solid #7f9db9; }
.topics .pod-head { height: 28px; border-bottom: 1px solid #86a9e6; padding: 5px 3px 0 5px; }
.topics .pod-head h2 { padding-left: 7px; }
.topic-tools {
  flex: none;
  display: flex;
  align-items: center;
  height: 26px;
  padding-left: 4px;
  background: #9fbbf4;
  border-bottom: 1px solid var(--line);
}
.combo-folder { width: 278px; height: 19px; padding-left: 4px; }
.combo-folder select { padding-left: 3px; }
.combo-folder > svg:last-child { background: #a5c0f3; }
.topic-list {
  flex: 1;
  min-height: 0;
  display: flex;
  flex-direction: column;
  border: 1px solid #7f9db9;
  border-right: 0;
  background: #fff;
}
table { width: 100%; border-collapse: collapse; table-layout: fixed; font: 11px/14px var(--list); }
.c-wide { width: 282px; }
.c-small { width: 84px; }
.c-mid { width: 113px; }
th {
  height: 20px;
  padding: 0 0 0 10px;
  text-align: left;
  font-weight: normal;
  white-space: nowrap;
  background: linear-gradient(#c5c2b2 0 0) right center / 1px 14px no-repeat, linear-gradient(var(--beige) 17px, #d0ccbc);
}
th:last-child { background: linear-gradient(var(--beige) 17px, #d0ccbc); }
th .sort { display: inline-block; width: 9px; height: 7px; margin-left: 4px; }
td { height: 20px; padding: 0 0 0 7px; white-space: nowrap; }
td:first-child { padding-left: 4px; }
td .icon { display: inline-block; margin-right: 3px; vertical-align: middle; }
.list-scroll { display: flex; align-items: center; height: 17px; margin-top: auto; background: #f7f6f0; }
.track { flex: 1; padding-right: 32px; margin: 0 2px; }
.thumb {
  display: block;
  height: 15px;
  border: 1px solid #a3b9ec;
  border-radius: 2px;
  background: repeating-linear-gradient(90deg, #8ca6e0 0 1px, transparent 1px 2px) center / 7px 5px no-repeat, #c3d5fb;
}

/* Right rail and status bar */
.rail { flex: none; width: 22px; padding: 2px 0 0 2px; }
.rail button {
  flex-direction: column;
  justify-content: flex-start;
  gap: 2px;
  width: 20px;
  height: 138px;
  padding-top: 4px;
  border: 1px solid var(--line);
  border-right: 0;
  border-radius: 3px 0 0 3px;
  background: linear-gradient(90deg, #ffc67e, #ffe0b4);
  font-family: var(--list);
}
.rail span { writing-mode: vertical-rl; }
.statusbar { flex: none; height: 17px; background: linear-gradient(#c9c6b6, #ece9d8 4px 13px, #dedac6); }

.cursor { position: absolute; left: 1284px; top: 929px; width: 12px; height: 21px; }
```
